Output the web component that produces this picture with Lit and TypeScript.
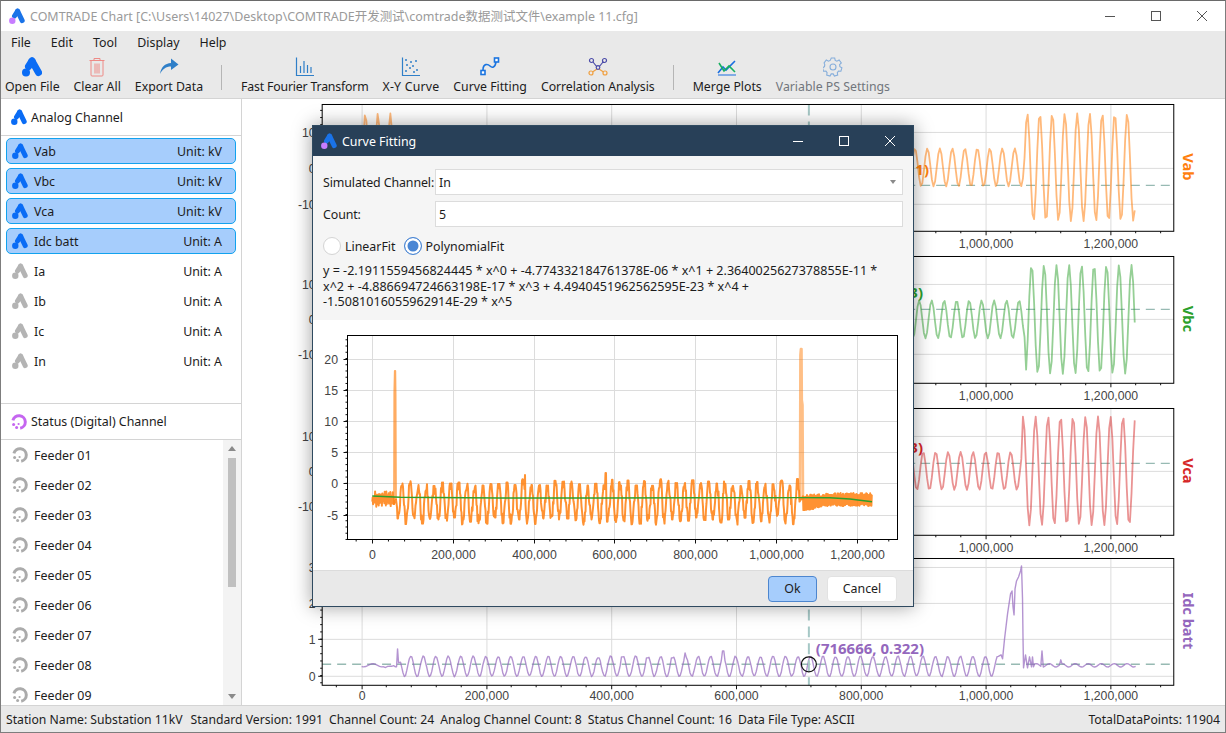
import { LitElement, html, css, svg } from "lit";
import { customElement } from "lit/decorators.js";

type Pt = [number, number];
const pts = (a: Pt[]) => a.map(([x, y]) => `${x.toFixed(1)},${y.toFixed(1)}`).join(" ");

function rng(seed: number) {
  let s = seed;
  return () => {
    s = (s * 1664525 + 1013904223) % 4294967296;
    return s / 4294967296;
  };
}

const PERIOD = 12.51;
function sineWave(peak: number, cy: number, small: number, large: number, fault: number): Pt[] {
  const out: Pt[] = [];
  for (let x = 361; x <= 1136.7; x += 1.6) {
    const amp = x < 396 || x >= fault ? large : small;
    out.push([x, cy - amp * Math.cos((2 * Math.PI * (x - peak)) / PERIOD)]);
  }
  return out;
}

function idcWave(): Pt[] {
  const out: Pt[] = [];
  const r = rng(11);
  for (let x = 361; x < 396; x += 2) {
    const dip = x > 384 ? 4 : 0;
    out.push([x, 666.5 + 1.6 * Math.sin(x / 3) + dip * r()]);
  }
  out.push([396, 668], [397, 650], [398, 664]);
  const bumps: Record<number, number> = { 685: 654, 723: 652, 622: 658, 598: 659, 647: 659, 672: 659 };
  for (let x = 400; x < 1000; x += 1.25) {
    let y = 667.5 - 10 * Math.cos((2 * Math.PI * (x - 410.3)) / PERIOD) + (r() - 0.5) * 1.2;
    for (const k of Object.keys(bumps)) {
      if (Math.abs(x - Number(k)) < 1) y = bumps[Number(k)];
    }
    out.push([x, y]);
  }
  out.push(
    [1001.5, 656], [1003, 660], [1005, 640], [1008, 615], [1011, 595], [1012.5, 592], [1013.5, 608],
    [1014.5, 616], [1015.5, 590], [1017, 582], [1019, 578], [1021, 572], [1022, 567], [1023, 600],
    [1023.5, 640], [1024, 669], [1026, 656], [1028, 669], [1030, 658], [1032, 668], [1033, 658], [1034, 668]
  );
  for (let x = 1035; x <= 1136.7; x += 1.25) {
    let y = 666.5 + 1.7 * Math.sin((2 * Math.PI * x) / 13);
    if (Math.abs(x - 1043) < 0.7) y = 652;
    if (Math.abs(x - 1061) < 0.7) y = 661;
    out.push([x, y]);
  }
  return out;
}

function fitWave(): Pt[] {
  const r = rng(7);
  const out: Pt[] = [];
  for (let x = 372.3; x < 394; x += 0.4) {
    out.push([x, out.length % 2 ? 491 + r() * 7 : 500 + r() * 7]);
  }
  let n = -1;
  let top = 486;
  let low = 520;
  for (let x = 396; x < 800; x += 0.5) {
    const k = Math.floor((x - 396) / 8.07);
    if (k !== n) {
      n = k;
      top = 479 + r() * 7;
      low = 517 + r() * 8;
    }
    const s = Math.sin((2 * Math.PI * (x - 396)) / 8.07);
    const mid = (top + low) / 2;
    const amp = (low - top) / 2;
    let y = mid + amp * s + (r() - 0.5) * 12;
    y = Math.max(top, Math.min(low, y));
    if (Math.abs(x - 525) < 0.3) y = 475;
    if (Math.abs(x - 605.7) < 0.3) y = 473;
    out.push([x, y]);
  }
  for (let x = 803; x < 872; x += 0.4) {
    const t = (x - 803) / 69;
    const hi = 495 - 2 * Math.min(1, t * 2);
    const lo = 512 - 6 * Math.min(1, t * 3);
    out.push([x, out.length % 2 ? hi + r() * 3 : lo - r() * 3]);
  }
  return out;
}

const SPIKE1: Pt[] = [[394, 505], [394.3, 392], [394.8, 371], [395.3, 371], [395.6, 395], [396, 500]];
const SPIKE2: Pt[] = [[800, 500], [800.4, 355], [800.9, 349], [801.5, 349], [801.8, 400], [802.5, 405], [803, 500]];

const FIT_CURVE: Pt[] = [
  [372.3, 496], [400, 497.2], [500, 498], [600, 498], [700, 497.8], [800, 497.6],
  [830, 497.8], [850, 499], [872, 501.7],
];

interface PlotCfg {
  left: number; right: number; top: number; bottom: number;
  xZero: number; xPer200k: number;
  yZero: number; yPerUnit: number; yVals: number[]; yMinor: number;
  yLabelEnd: number; xLabelBase: number; labelFromX: number;
}

function axes(c: PlotCfg) {
  const parts: unknown[] = [];
  const xOf = (v: number) => c.xZero + (v * c.xPer200k) / 200000;
  const yOf = (v: number) => c.yZero - v * c.yPerUnit;
  for (let v = 0; xOf(v) < c.right; v += 200000) {
    const x = Math.round(xOf(v)) + 0.5;
    parts.push(svg`<line class="grid" x1=${x} x2=${x} y1=${c.top} y2=${c.bottom}></line>`);
    parts.push(svg`<line class="tick" x1=${x} x2=${x} y1=${c.bottom} y2=${c.bottom + 4}></line>`);
    if (x >= c.labelFromX) {
      parts.push(svg`<text class="lbl" text-anchor="middle" x=${x} y=${c.xLabelBase}>${v.toLocaleString("en-US")}</text>`);
    }
  }
  for (let k = -5; xOf(k * 40000) < c.right; k++) {
    if (k % 5 === 0) continue;
    const x = xOf(k * 40000);
    if (x < c.left) continue;
    parts.push(svg`<line class="tick" x1=${x} x2=${x} y1=${c.bottom} y2=${c.bottom + 2}></line>`);
  }
  for (const v of c.yVals) {
    const y = Math.round(yOf(v)) + 0.5;
    parts.push(svg`<line class="grid" x1=${c.left} x2=${c.right} y1=${y} y2=${y}></line>`);
    parts.push(svg`<line class="tick" x1=${c.left - 4} x2=${c.left} y1=${y} y2=${y}></line>`);
    parts.push(svg`<text class="lbl" text-anchor="end" x=${c.yLabelEnd} y=${y + 4.3}>${v}</text>`);
  }
  const maxV = (c.yZero - c.top) / c.yPerUnit;
  const minV = (c.yZero - c.bottom) / c.yPerUnit;
  for (let k = Math.ceil(minV / c.yMinor); k * c.yMinor <= maxV; k++) {
    const y = yOf(k * c.yMinor);
    parts.push(svg`<line class="tick" x1=${c.left - 2} x2=${c.left} y1=${y} y2=${y}></line>`);
  }
  return parts;
}

interface ChartDef {
  name: string; color: string; y0: number; h: number; top: number; bottom: number;
  yZero: number; yPerUnit: number; yVals: number[]; yMinor: number;
  dashY: number; line: Pt[]; tip: string; tipX: number; tipY: number; xLabel: number; op: number; sw: number; labelFromX: number;
}

const CHARTS: ChartDef[] = [
  { name: "Vab", color: "#ff7f0e", y0: 99, h: 152, top: 104.5, bottom: 231.5, yZero: 167.7, yPerUnit: 3.58,
    yVals: [-10, 0, 10], yMinor: 2, dashY: 185.5, line: sineWave(927.7, 167.5, 19, 54, 1024),
    tip: "(716666, 5.111)", tipX: 821, tipY: 175, xLabel: 248, op: 0.55, sw: 1.8, labelFromX: 920 },
  { name: "Vbc", color: "#2ca02c", y0: 251, h: 152, top: 256.5, bottom: 383.5, yZero: 319.3, yPerUnit: 3.5,
    yVals: [-10, 0, 10], yMinor: 2, dashY: 309.5, line: sineWave(932, 319.5, 19, 54.5, 1026),
    tip: "(716666, 2.833)", tipX: 815, tipY: 298, xLabel: 400, op: 0.5, sw: 1.8, labelFromX: 920 },
  { name: "Vca", color: "#d62728", y0: 403, h: 152, top: 408.5, bottom: 535.5, yZero: 471.3, yPerUnit: 3.5,
    yVals: [-10, 0, 10], yMinor: 2, dashY: 463.5, line: sineWave(936, 471, 19, 54.5, 1022),
    tip: "(716666, 2.333)", tipX: 815, tipY: 453, xLabel: 552, op: 0.5, sw: 1.8, labelFromX: 920 },
  { name: "Idc batt", color: "#9467bd", y0: 555, h: 151, top: 559.5, bottom: 686.5, yZero: 676.7, yPerUnit: 36.4,
    yVals: [0, 1, 2, 3], yMinor: 0.2, dashY: 665.5, line: idcWave(),
    tip: "(716666, 0.322)", tipX: 816, tipY: 655, xLabel: 701, op: 0.7, sw: 1.4, labelFromX: 0 },
];

const logo = (right: string, dot: string, left = right) => html`<svg class="lg" viewBox="0 0 16 16">
  <line x1="8.6" y1="3.2" x2="5.5" y2="8" stroke=${left} stroke-width="5" stroke-linecap="round"></line>
  <line x1="8.6" y1="3.2" x2="13.2" y2="12.6" stroke=${right} stroke-width="5" stroke-linecap="round"></line>
  <circle cx="3.3" cy="12.7" r="3.2" fill=${dot}></circle>
</svg>`;

const statusIcon = (c: string) => html`<svg class="lg" viewBox="0 0 16 16" fill="none">
  <path d="M1.9 6.4A6.3 6.3 0 1 1 9.2 14.2" stroke=${c} stroke-width="3"></path>
  <circle cx="2.6" cy="10.6" r="1.5" fill=${c}></circle>
  <circle cx="5.6" cy="13.6" r="1.5" fill=${c}></circle>
  <circle cx="7.6" cy="10" r="1.1" fill=${c}></circle>
</svg>`;

const ICONS = {
  open: html`<svg class="ti" viewBox="0 0 20 20">
    <line x1="10" y1="4" x2="16.5" y2="15.5" stroke="#0a6cf5" stroke-width="7" stroke-linecap="round"></line>
    <line x1="10" y1="4" x2="6.5" y2="9.5" stroke="#0a6cf5" stroke-width="7" stroke-linecap="round"></line>
    <circle cx="4" cy="15.5" r="4" fill="#0a6cf5"></circle></svg>`,
  trash: html`<svg class="ti" viewBox="0 0 20 20" fill="none" stroke="#ee8a86" stroke-width="1">
    <path d="M2.5 3.5h15M7 3.5V1.5h6v2M4 3.5v14.5a1 1 0 0 0 1 1h10a1 1 0 0 0 1-1V3.5M8 6.5v10M12 6.5v10M10 6.5v10"></path></svg>`,
  share: html`<svg class="ti" viewBox="0 0 20 20">
    <path d="M1 17C2 10 6 6.5 12 6V1.5L19.5 7.5 12 13V9.5C7 9.5 3.5 12 1 17Z" fill="#2f7fc8"></path></svg>`,
  fft: html`<svg class="ti" viewBox="0 0 20 20" fill="none" stroke="#2f7fc8" stroke-width="1.2">
    <path d="M1.5 0.5V18.5H19M5.5 9V16M9 4V16M12.5 8V16M16 10V16"></path></svg>`,
  xy: html`<svg class="ti" viewBox="0 0 20 20" fill="none" stroke="#2f7fc8" stroke-width="1.2">
    <path d="M1.5 0.5V18.5H19"></path>
    <g fill="#2f7fc8" stroke="none"><circle cx="5" cy="14" r="1"></circle><circle cx="6" cy="8" r="1"></circle>
    <circle cx="9" cy="11" r="1"></circle><circle cx="10" cy="5" r="1"></circle><circle cx="12" cy="9" r="1"></circle>
    <circle cx="15" cy="4" r="1"></circle><circle cx="16" cy="13" r="1"></circle><circle cx="13" cy="15" r="1"></circle>
    <circle cx="5" cy="3" r="1"></circle></g></svg>`,
  curve: html`<svg class="ti" viewBox="0 0 20 20" fill="none" stroke="#1a74e0" stroke-width="1.6">
    <path d="M3 13C3 6 8 7 10 9S15 11 16 5"></path>
    <rect x="1" y="13.5" width="4" height="4" fill="#fff"></rect><rect x="14.5" y="1" width="4" height="4" fill="#fff"></rect></svg>`,
  corr: html`<svg class="ti" viewBox="0 0 20 20" fill="none" stroke-width="1.2">
    <path d="M5 5L9 10M15 5L11 10" stroke="#4a4aa8"></path>
    <path d="M9 12L4.5 15M11 12L15.5 15" stroke="#f0a040"></path>
    <circle cx="3.5" cy="3.5" r="2" stroke="#4a4aa8"></circle><circle cx="16.5" cy="3.5" r="2" stroke="#4a4aa8"></circle>
    <circle cx="10" cy="10.5" r="1.8" stroke="#4a4aa8"></circle>
    <circle cx="3" cy="16" r="2" stroke="#f0a040"></circle><circle cx="17" cy="16" r="2" stroke="#f0a040"></circle></svg>`,
  merge: html`<svg class="ti" viewBox="0 0 20 20" fill="none" stroke-width="1.6">
    <path d="M1 16L6 10 9 13 18 4" stroke="#1a6ee0"></path>
    <path d="M2 6L7 14 12 9 18 15" stroke="#18b060"></path>
    <path d="M1 18H19" stroke="#1a6ee0" stroke-width="1"></path></svg>`,
  gear: html`<svg class="ti" viewBox="0 0 20 20" fill="none" stroke="#86aedb" stroke-width="1.1">
    <path d="M8.3 1h3.4l.5 2.4 1.7.8 2.2-1.2 2.2 2.9-1.7 1.8.3 1.9 2 1.2-1 3.4-2.4-.1-1.2 1.5.4 2.4-3.3 1-1.2-2.1h-2l-1.2 2.1-3.3-1 .4-2.4-1.2-1.5-2.4.1-1-3.4 2-1.2.3-1.9L1.1 5.9l2.2-2.9 2.2 1.2 1.7-.8z"></path>
    <circle cx="10" cy="10" r="3"></circle></svg>`,
};

const TOOLS_A: [unknown, string, string][] = [
  [ICONS.open, "Open File", ""], [ICONS.trash, "Clear All", ""], [ICONS.share, "Export Data", ""],
];
const TOOLS_B: [unknown, string, string][] = [
  [ICONS.fft, "Fast Fourier Transform", "tight"], [ICONS.xy, "X-Y Curve", "wide"], [ICONS.curve, "Curve Fitting", ""],
  [ICONS.corr, "Correlation Analysis", "snug"],
];

const CHANNELS: [string, string, boolean][] = [
  ["Vab", "kV", true], ["Vbc", "kV", true], ["Vca", "kV", true], ["Idc batt", "A", true],
  ["Ia", "A", false], ["Ib", "A", false], ["Ic", "A", false], ["In", "A", false],
];

const FEEDERS = Array.from({ length: 9 }, (_, i) => `Feeder ${String(i + 1).padStart(2, "0")}`);

@customElement("app-root")
export class AppRoot extends LitElement {
  static styles = css`
    :host {
      display: flex;
      flex-direction: column;
      box-sizing: border-box;
      position: relative;
      width: 1226px;
      height: 733px;
      overflow: hidden;
      border: 1px solid #7d7d7d;
      border-top-color: #6a6a6a;
      background: #fff;
      font-family: "Noto Sans", "Noto Sans CJK SC", sans-serif;
      font-size: 12.4px;
      color: #1c1c1c;
    }
    .lg { width: 16px; height: 16px; flex: none; display: block; }
    .ti { width: 20px; height: 20px; display: block; }

    .title { height: 30px; display: flex; align-items: center; padding-left: 8px; gap: 5px; flex: none; color: #9a9a9a; font-size: 12.47px; }
    .wc { margin-left: auto; display: flex; }
    .wc svg { width: 46px; height: 30px; display: block; }

    .top { background: #e9e9e9; border-bottom: 1px solid #d4d4d4; height: 68px; box-sizing: border-box; flex: none; }
    .menu { display: flex; gap: 20px; padding-left: 10px; height: 23px; align-items: center; margin-bottom: 1px; }
    .tools { display: flex; align-items: flex-start; padding: 2px 0 0 4px; font-size: 12.3px; }
    .tb { display: flex; flex-direction: column; align-items: center; margin-right: 14px; line-height: 20px; height: 40px; white-space: nowrap; }
    .tb.off { color: #71767c; margin-right: 0; }
    .tight { letter-spacing: -0.18px; }
    .wide { letter-spacing: 0.2px; }
    .snug { letter-spacing: -0.05px; }
    .sep { width: 1px; height: 25px; background: #b5b5b5; margin: 8px 19px 0 4px; }

    .body { flex: 1; display: flex; min-height: 0; }
    .side { width: 240px; border-right: 1px solid #d4d4d4; display: flex; flex-direction: column; flex: none; }
    .head { display: flex; align-items: center; gap: 4px; padding-left: 10px; flex: none; height: 36px; border-bottom: 1px solid #d4d4d4; }
    .head.s { height: 35px; }
    .analog { height: 268px; padding: 2px 5px 0; box-sizing: border-box; border-bottom: 1px solid #d4d4d4; flex: none; display: flex; flex-direction: column; gap: 4px; }
    .ch { height: 26px; box-sizing: border-box; flex: none; display: flex; align-items: center; gap: 6px; padding: 0 13px 0 5px; border: 1px solid transparent; border-radius: 5px; }
    .ch.on { background: #a6cdfc; border-color: #12a2ee; }
    .ch .u { margin-left: auto; }
    .status { flex: 1; display: flex; min-height: 0; }
    .list { flex: 1; overflow: hidden; }
    .fd { height: 30px; display: flex; align-items: center; gap: 6px; padding-left: 11px; }
    .sb { width: 18px; background: #f3f3f3; display: flex; flex-direction: column; align-items: center; flex: none; }
    .up, .dn { width: 0; height: 0; border-left: 4px solid transparent; border-right: 4px solid transparent; }
    .up { border-bottom: 5px solid #8a8a8a; margin-top: 6px; }
    .dn { border-top: 5px solid #8a8a8a; margin-top: auto; margin-bottom: 6px; }
    .thumb { width: 8px; height: 129px; background: #c0c0c0; margin-top: 7px; }

    .charts { flex: 1; display: flex; flex-direction: column; min-width: 0; }
    .charts svg, .fitplot svg { display: block; }
    .grid { stroke: #dcdcdc; stroke-width: 1; }
    .tick { stroke: #111; stroke-width: 1; }
    .box { fill: none; stroke: #000; stroke-width: 1; }
    .lbl { font-family: "Liberation Sans", Arial, sans-serif; font-size: 12.3px; fill: #444; }
    .name { font-family: "Noto Sans", sans-serif; font-size: 14.6px; font-weight: 700; }
    .tip { font-family: "Noto Sans", sans-serif; font-size: 15px; font-weight: 700; }
    .sig { fill: none; stroke-linejoin: round; }
    .dash { stroke: #86aea6; stroke-width: 1.4; stroke-dasharray: 9 6; opacity: .85; }
    .vdash { stroke: #a6c8c6; stroke-width: 2; stroke-dasharray: 11 6; }

    .stat { height: 27px; box-sizing: border-box; flex: none; background: #e9e9e9; border-top: 1px solid #d4d4d4; display: flex; align-items: center; gap: 6px; padding: 0 5px; font-size: 12.2px; }
    .stat .first { margin-right: 2px; }
    .stat .end { margin-left: auto; }

    .dlg { position: absolute; left: 311px; top: 124px; width: 602px; height: 482px; box-sizing: border-box; border: 1px solid #2f4a60; display: flex; flex-direction: column; background: #fff; box-shadow: 0 0 18px rgba(0, 0, 0, .38); }
    .dt { height: 30px; flex: none; background: #284058; color: #fff; display: flex; align-items: center; padding-left: 8px; gap: 5px; }
    .dwc { margin-left: auto; display: flex; }
    .dwc svg { width: 46px; height: 30px; display: block; }
    .form { height: 164px; flex: none; box-sizing: border-box; background: #f5f5f5; padding: 13px 10px 0; display: flex; flex-direction: column; }
    .fr { display: grid; grid-template-columns: 112px 1fr; height: 26px; align-items: center; margin-bottom: 6px; white-space: nowrap; }
    .lab { letter-spacing: -0.1px; }
    .fld { height: 26px; box-sizing: border-box; background: #fff; border: 1px solid #dcdcdc; display: flex; align-items: center; padding-left: 3px; }
    .caret { margin-left: auto; margin-right: 6px; width: 0; height: 0; border-left: 3.5px solid transparent; border-right: 3.5px solid transparent; border-top: 4px solid #8a8a8a; }
    .radios { display: flex; align-items: center; height: 20px; margin-top: 3px; }
    .rd { display: flex; align-items: center; gap: 4px; margin-right: 8px; }
    .dot { width: 18px; height: 18px; box-sizing: border-box; border-radius: 50%; background: #fff; border: 1px solid #d4d4d4; }
    .dot.on { border-color: #4a86d4; background: #4a86d4; box-shadow: inset 0 0 0 2.5px #fff; }
    .res { margin-top: 7px; line-height: 15.7px; font-size: 12.56px; white-space: nowrap; }
    .fitplot { height: 250px; flex: none; }
    .foot { flex: 1; background: #e9e9e9; border-top: 1px solid #dcdcdc; display: flex; justify-content: flex-end; gap: 10px; padding: 5px 16px 0 0; box-sizing: border-box; }
    .btn { height: 26px; box-sizing: border-box; border-radius: 4px; display: flex; align-items: center; justify-content: center; padding-bottom: 2px; }
    .ok { width: 49px; background: #a6cdfc; border: 1px solid #4d86cf; }
    .cancel { width: 70px; background: #fff; border: 1px solid #e2e2e2; }
  `;

  private chart(c: ChartDef) {
    const cfg: PlotCfg = {
      left: 321.5, right: 1174.5, top: c.top, bottom: c.bottom, xZero: 360.7, xPer200k: 125.1,
      yZero: c.yZero, yPerUnit: c.yPerUnit, yVals: c.yVals, yMinor: c.yMinor, yLabelEnd: 315, xLabelBase: c.xLabel,
      labelFromX: c.labelFromX,
    };
    const cy = (c.top + c.bottom) / 2 - 1;
    return html`<svg width="983" height=${c.h} viewBox="242 ${c.y0} 983 ${c.h}">
      ${axes(cfg)}
      <line class="dash" x1="321.5" x2="1174" y1=${c.dashY} y2=${c.dashY}></line>
      <polyline class="sig" points=${pts(c.line)} stroke=${c.color} stroke-width=${c.sw} stroke-opacity=${c.op}></polyline>
      <line class="vdash" x1="809" x2="809" y1=${c.top} y2=${c.bottom}></line>
      <rect class="box" x="321.5" y=${c.top} width="853" height=${c.bottom - c.top}></rect>
      <text class="tip" x=${c.tipX} y=${c.tipY} fill=${c.color}>${c.tip}</text>
      ${c.name === "Idc batt"
        ? svg`<circle cx="809" cy="665.5" r="7.5" fill="none" stroke="#111" stroke-width="1.2"></circle>`
        : ""}
      <text class="name" fill=${c.color} text-anchor="middle" dominant-baseline="central"
        transform="rotate(90 1189.5 ${cy})" x="1189.5" y=${cy}>${c.name}</text>
    </svg>`;
  }

  private fitChart() {
    const cfg: PlotCfg = {
      left: 347.5, right: 897.5, top: 335.5, bottom: 539.5, xZero: 372.3, xPer200k: 80.7,
      yZero: 483.3, yPerUnit: 6.24, yVals: [-5, 0, 5, 10, 15, 20], yMinor: 1, yLabelEnd: 338, xLabelBase: 558.5,
      labelFromX: 0,
    };
    return html`<svg width="600" height="250" viewBox="313 320 600 250">
      ${axes(cfg)}
      <polyline class="sig" points=${pts(SPIKE1)} stroke="#ff7f0e" stroke-width="1.8" stroke-opacity=".65"></polyline>
      <polyline class="sig" points=${pts(SPIKE2)} stroke="#ff7f0e" stroke-width="2.6" stroke-opacity=".5"></polyline>
      <polyline class="sig" points=${pts(fitWave())} stroke="#ff7f0e" stroke-width="2" stroke-opacity=".85"></polyline>
      <polyline class="sig" points=${pts(FIT_CURVE)} stroke="#2ca02c" stroke-width="1.4"></polyline>
      <rect class="box" x="347.5" y="335.5" width="550" height="204"></rect>
    </svg>`;
  }

  private windowControls(stroke: string, cls: string) {
    return html`<div class=${cls}>
      <svg viewBox="0 0 46 30"><line x1="18" x2="28" y1="15.5" y2="15.5" stroke=${stroke}></line></svg>
      <svg viewBox="0 0 46 30"><rect x="18.5" y="10.5" width="9" height="9" fill="none" stroke=${stroke}></rect></svg>
      <svg viewBox="0 0 46 30"><path d="M18 10l10 10M28 10l-10 10" fill="none" stroke=${stroke}></path></svg>
    </div>`;
  }

  render() {
    return html`
      <div class="title">
        ${logo("#1a73e8", "#c77dff")}
        <span>COMTRADE Chart [C:\\Users\\14027\\Desktop\\COMTRADE开发测试\\comtrade数据测试文件\\example 11.cfg]</span>
        ${this.windowControls("#555", "wc")}
      </div>
      <div class="top">
        <div class="menu">
          <span>File</span><span>Edit</span><span>Tool</span><span>Display</span><span>Help</span>
        </div>
        <div class="tools">
          ${TOOLS_A.map(([i, t, c]) => html`<div class="tb">${i}<span class=${c}>${t}</span></div>`)}
          <div class="sep"></div>
          ${TOOLS_B.map(([i, t, c]) => html`<div class="tb">${i}<span class=${c}>${t}</span></div>`)}
          <div class="sep"></div>
          <div class="tb">${ICONS.merge}<span>Merge Plots</span></div>
          <div class="tb off">${ICONS.gear}<span>Variable PS Settings</span></div>
        </div>
      </div>
      <div class="body">
        <div class="side">
          <div class="head">${logo("#0a6cf5", "#0a6cf5")}<span>Analog Channel</span></div>
          <div class="analog">
            ${CHANNELS.map(([n, u, on]) => html`<div class="ch ${on ? "on" : ""}">
              ${on ? logo("#0a6cf5", "#0a6cf5") : logo("#b4b4b4", "#b4b4b4")}
              <span>${n}</span><span class="u">Unit: ${u}</span>
            </div>`)}
          </div>
          <div class="head s">${statusIcon("#c566f0")}<span>Status (Digital) Channel</span></div>
          <div class="status">
            <div class="list">
              ${FEEDERS.map((f) => html`<div class="fd">${statusIcon("#ababab")}<span>${f}</span></div>`)}
            </div>
            <div class="sb"><div class="up"></div><div class="thumb"></div><div class="dn"></div></div>
          </div>
        </div>
        <div class="charts">${CHARTS.map((c) => this.chart(c))}</div>
      </div>
      <div class="stat">
        <span class="first">Station Name: Substation 11kV</span>
        <span>Standard Version: 1991</span>
        <span>Channel Count: 24</span>
        <span>Analog Channel Count: 8</span>
        <span>Status Channel Count: 16</span>
        <span>Data File Type: ASCII</span>
        <span class="end">TotalDataPoints: 11904</span>
      </div>

      <div class="dlg">
        <div class="dt">
          ${logo("#1a73e8", "#c77dff")}
          <span>Curve Fitting</span>
          ${this.windowControls("#fff", "dwc")}
        </div>
        <div class="form">
          <div class="fr"><span class="lab">Simulated Channel:</span><div class="fld"><span>In</span><i class="caret"></i></div></div>
          <div class="fr"><span class="lab">Count:</span><div class="fld"><span>5</span></div></div>
          <div class="radios">
            <div class="rd"><div class="dot"></div><span>LinearFit</span></div>
            <div class="rd"><div class="dot on"></div><span>PolynomialFit</span></div>
          </div>
          <div class="res">y = -2.1911559456824445 * x^0 + -4.774332184761378E-06 * x^1 + 2.3640025627378855E-11 *<br />x^2 + -4.886694724663198E-17 * x^3 + 4.4940451962562595E-23 * x^4 +<br />-1.5081016055962914E-29 * x^5</div>
        </div>
        <div class="fitplot">${this.fitChart()}</div>
        <div class="foot">
          <div class="btn ok">Ok</div>
          <div class="btn cancel">Cancel</div>
        </div>
      </div>
    `;
  }
}
